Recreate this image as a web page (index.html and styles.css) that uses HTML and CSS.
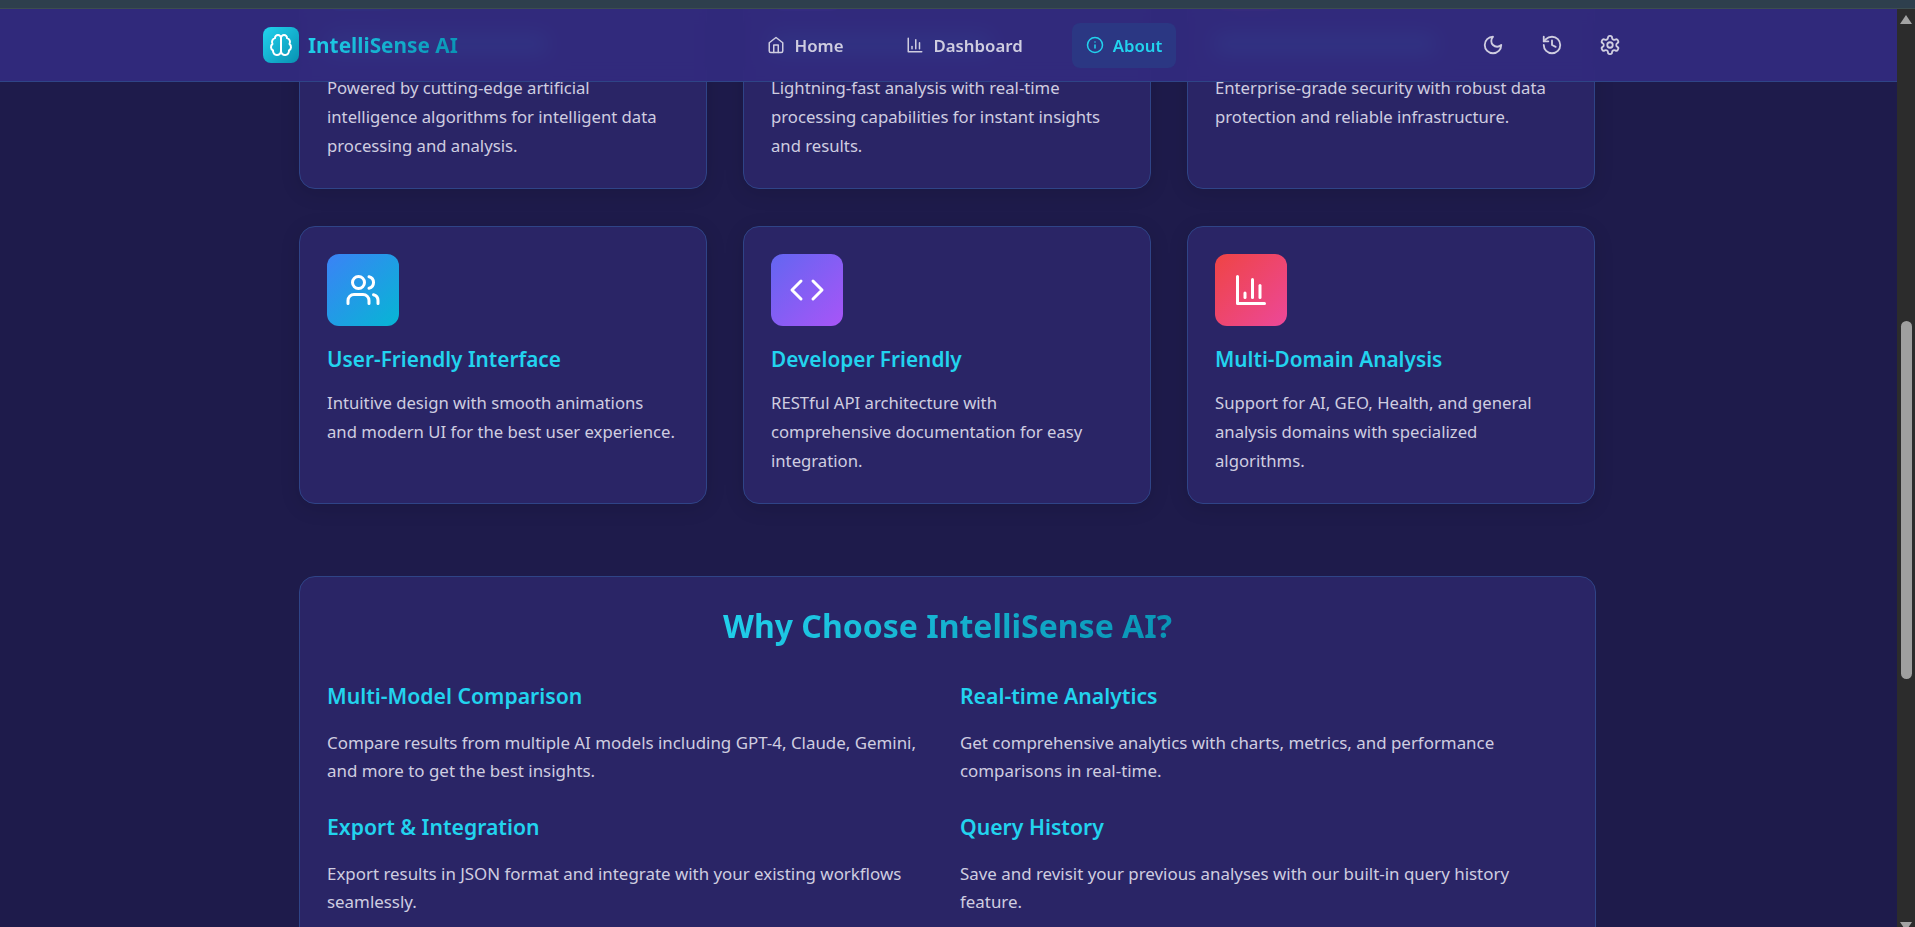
FILE: index.html
```html
<!DOCTYPE html>
<html>

<head>
    <meta name="viewport" content="width=device-width, initial-scale=1">
    <title>IntelliSense AI - About</title>
    <link rel="stylesheet" href="styles.css">
</head>

<body>

<div class="topstrip"></div>

<div class="window">

    <div class="viewport">

        <nav class="navbar">
            <div class="nav-inner">
                <a href="#" class="brand">
                    <span class="brand-icon">
                        <svg class="icon" width="24" height="24" viewBox="0 0 24 24"><path d="M12 5a3 3 0 1 0-5.997.125 4 4 0 0 0-2.526 5.77 4 4 0 0 0 .556 6.588A4 4 0 1 0 12 18Z"/><path d="M12 5a3 3 0 1 1 5.997.125 4 4 0 0 1 2.526 5.77 4 4 0 0 1-.556 6.588A4 4 0 1 1 12 18Z"/></svg>
                    </span>
                    <span class="brand-name gradient-text">IntelliSense AI</span>
                </a>

                <div class="nav-links">
                    <a href="#" class="nav-link">
                        <svg class="icon" width="18" height="18" viewBox="0 0 24 24"><path d="m3 9 9-7 9 7v11a2 2 0 0 1-2 2H5a2 2 0 0 1-2-2z"/><path d="M9 22V12h6v10"/></svg>
                        Home
                    </a>
                    <a href="#" class="nav-link">
                        <svg class="icon" width="18" height="18" viewBox="0 0 24 24"><path d="M3 3v18h18"/><path d="M18 17V9"/><path d="M13 17V5"/><path d="M8 17v-3"/></svg>
                        Dashboard
                    </a>
                    <a href="#" class="nav-link active">
                        <svg class="icon" width="18" height="18" viewBox="0 0 24 24"><circle cx="12" cy="12" r="10"/><path d="M12 16v-4"/><path d="M12 8h.01"/></svg>
                        About
                    </a>
                </div>

                <div class="nav-actions">
                    <button class="icon-btn">
                        <svg class="icon" width="22" height="22" viewBox="0 0 24 24"><path d="M12 3a6 6 0 0 0 9 9 9 9 0 1 1-9-9Z"/></svg>
                    </button>
                    <button class="icon-btn">
                        <svg class="icon" width="22" height="22" viewBox="0 0 24 24"><path d="M3 12a9 9 0 1 0 9-9 9.75 9.75 0 0 0-6.74 2.74L3 8"/><path d="M3 3v5h5"/><path d="M12 7v5l4 2"/></svg>
                    </button>
                    <button class="icon-btn">
                        <svg class="icon" width="22" height="22" viewBox="0 0 24 24"><path d="M12.22 2h-.44a2 2 0 0 0-2 2v.18a2 2 0 0 1-1 1.73l-.43.25a2 2 0 0 1-2 0l-.15-.08a2 2 0 0 0-2.73.73l-.22.38a2 2 0 0 0 .73 2.73l.15.1a2 2 0 0 1 1 1.72v.51a2 2 0 0 1-1 1.74l-.15.09a2 2 0 0 0-.73 2.73l.22.38a2 2 0 0 0 2.73.73l.15-.08a2 2 0 0 1 2 0l.43.25a2 2 0 0 1 1 1.73V20a2 2 0 0 0 2 2h.44a2 2 0 0 0 2-2v-.18a2 2 0 0 1 1-1.73l.43-.25a2 2 0 0 1 2 0l.15.08a2 2 0 0 0 2.73-.73l.22-.39a2 2 0 0 0-.73-2.73l-.15-.08a2 2 0 0 1-1-1.74v-.5a2 2 0 0 1 1-1.74l.15-.09a2 2 0 0 0 .73-2.73l-.22-.38a2 2 0 0 0-2.73-.73l-.15.08a2 2 0 0 1-2 0l-.43-.25a2 2 0 0 1-1-1.73V4a2 2 0 0 0-2-2z"/><circle cx="12" cy="12" r="3"/></svg>
                    </button>
                </div>
            </div>
        </nav>

        <main class="content">

            <section class="features">
                <!-- top of this row is scrolled away under the navbar -->
                <div class="card">
                    <div class="card-icon icon-cyan"></div>
                    <div class="title-under-nav"></div>
                    <p>Powered by cutting-edge artificial intelligence algorithms for intelligent data processing and analysis.</p>
                </div>
                <div class="card">
                    <div class="card-icon icon-purple"></div>
                    <div class="title-under-nav"></div>
                    <p>Lightning-fast analysis with real-time processing capabilities for instant insights and results.</p>
                </div>
                <div class="card">
                    <div class="card-icon icon-red"></div>
                    <div class="title-under-nav"></div>
                    <p>Enterprise-grade security with robust data protection and reliable infrastructure.</p>
                </div>

                <div class="card">
                    <div class="card-icon icon-blue">
                        <svg class="icon" width="36" height="36" viewBox="0 0 24 24"><path d="M16 21v-2a4 4 0 0 0-4-4H6a4 4 0 0 0-4 4v2"/><circle cx="9" cy="7" r="4"/><path d="M22 21v-2a4 4 0 0 0-3-3.87"/><path d="M16 3.13a4 4 0 0 1 0 7.75"/></svg>
                    </div>
                    <h3>User-Friendly Interface</h3>
                    <p>Intuitive design with smooth animations and modern UI for the best user experience.</p>
                </div>
                <div class="card">
                    <div class="card-icon icon-purple">
                        <svg class="icon" width="36" height="36" viewBox="0 0 24 24"><path d="m16 18 6-6-6-6"/><path d="m8 6-6 6 6 6"/></svg>
                    </div>
                    <h3>Developer Friendly</h3>
                    <p>RESTful API architecture with comprehensive documentation for easy integration.</p>
                </div>
                <div class="card">
                    <div class="card-icon icon-red">
                        <svg class="icon" width="36" height="36" viewBox="0 0 24 24"><path d="M3 3v18h18"/><path d="M18 17V9"/><path d="M13 17V5"/><path d="M8 17v-3"/></svg>
                    </div>
                    <h3>Multi-Domain Analysis</h3>
                    <p>Support for AI, GEO, Health, and general analysis domains with specialized algorithms.</p>
                </div>
            </section>

            <section class="why">
                <h2 class="gradient-text">Why Choose IntelliSense AI?</h2>
                <div class="why-grid">
                    <div class="why-item">
                        <h4>Multi-Model Comparison</h4>
                        <p>Compare results from multiple AI models including GPT-4, Claude, Gemini, and more to get the best insights.</p>
                    </div>
                    <div class="why-item">
                        <h4>Real-time Analytics</h4>
                        <p>Get comprehensive analytics with charts, metrics, and performance comparisons in real-time.</p>
                    </div>
                    <div class="why-item">
                        <h4>Export &amp; Integration</h4>
                        <p>Export results in JSON format and integrate with your existing workflows seamlessly.</p>
                    </div>
                    <div class="why-item">
                        <h4>Query History</h4>
                        <p>Save and revisit your previous analyses with our built-in query history feature.</p>
                    </div>
                </div>
            </section>

        </main>
    </div>

    <div class="scrollbar">
        <span class="arrow-up"></span>
        <span class="thumb"></span>
        <span class="arrow-down"></span>
    </div>

</div>

</body>
</html>
```

FILE: styles.css
```css
* {
    box-sizing: border-box;
}

html, body {
    height: 100%;
    margin: 0;
    overflow: hidden;
}

body {
    display: flex;
    flex-direction: column;
    background-color: #1e1b4b;
    color: #cfcde0;
    font-family: "Noto Sans", "Open Sans", sans-serif;
    font-size: 16.9px;
}

a {
    color: inherit;
    text-decoration: none;
}

.topstrip {
    height: 9px;
    flex: none;
    background-color: #2e3f4d;
    border-bottom: 1px solid #3d4d50;
}

.window {
    flex: 1;
    display: flex;
    min-height: 0;
}

.viewport {
    flex: 1;
    position: relative;
    overflow: hidden;
}

.icon {
    fill: none;
    stroke: currentColor;
    stroke-width: 2;
    stroke-linecap: round;
    stroke-linejoin: round;
    flex: none;
}

/* nav sits over the scrolled content */
.navbar {
    position: absolute;
    top: 0;
    left: 0;
    right: 0;
    z-index: 10;
    height: 73px;
    background-color: rgba(49, 42, 125, 0.95);
    border-bottom: 1px solid #2f4487;
    backdrop-filter: blur(10px);
}

.nav-inner {
    width: 1371px;
    height: 100%;
    margin: 0 auto;
    display: flex;
    align-items: center;
    justify-content: space-between;
}

.brand {
    display: flex;
    align-items: center;
    gap: 9px;
}

.brand-icon {
    width: 36px;
    height: 36px;
    border-radius: 8px;
    display: flex;
    align-items: center;
    justify-content: center;
    color: #fff;
    background: linear-gradient(135deg, #22d3ee, #0891b2);
}

.brand-name {
    font-size: 20.8px;
    font-weight: 700;
}

.gradient-text {
    background: linear-gradient(135deg, #22d3ee, #0891b2);
    -webkit-background-clip: text;
    background-clip: text;
    color: transparent;
}

.nav-links {
    display: flex;
    align-items: center;
    gap: 35px;
    margin-left: -10px;
}

.nav-link {
    height: 45px;
    padding: 0 14px;
    border-radius: 8px;
    display: flex;
    align-items: center;
    gap: 9px;
    font-size: 16.8px;
    font-weight: 600;
    color: #cfcde0;
}

.nav-link.active {
    background-color: #2b3783;
    color: #22d3ee;
}

.nav-actions {
    display: flex;
    gap: 36.5px;
    padding-right: 13px;
}

.icon-btn {
    width: 22px;
    height: 22px;
    padding: 0;
    border: none;
    background: none;
    color: #cfcde0;
    cursor: pointer;
}

/* page is scrolled, so the first row starts above the fold */
.content {
    width: 1297px;
    margin: -98px 0 0 299px;
}

.features {
    display: grid;
    grid-template-columns: repeat(3, 408px);
    column-gap: 36px;
    row-gap: 37px;
}

.card {
    height: 278px;
    padding: 27px;
    background-color: #2a2566;
    border: 1px solid #2f4487;
    border-radius: 16px;
    box-shadow: 0 4px 20px rgba(0, 0, 0, 0.12);
}

.card-icon {
    width: 72px;
    height: 72px;
    border-radius: 12px;
    display: flex;
    align-items: center;
    justify-content: center;
    color: #fff;
    margin-bottom: 17px;
}

.icon-cyan {
    background: linear-gradient(135deg, #22d3ee, #0891b2);
}

.icon-blue {
    background: linear-gradient(135deg, #3b82f6, #06b6d4);
}

.icon-purple {
    background: linear-gradient(135deg, #6366f1, #a855f7);
}

.icon-red {
    background: linear-gradient(135deg, #ef4444, #ec4899);
}

.card h3 {
    margin: 0 0 13px;
    font-size: 20.8px;
    line-height: 32px;
    font-weight: 600;
    color: #22d3ee;
}

/* blurred heading showing faintly through the navbar */
.title-under-nav {
    width: 220px;
    height: 32px;
    padding: 6px 0;
    margin-bottom: 13px;
    background-color: #22d3ee;
    background-clip: content-box;
}

.card p {
    max-width: 349px;
    margin: 0;
    font-size: 16.7px;
    line-height: 29px;
}

.why {
    margin-top: 72px;
    padding: 25px 27px 60px;
    background-color: #2a2566;
    border: 1px solid #2f4487;
    border-radius: 16px;
}

.why h2 {
    width: fit-content;
    margin: 0 auto 31px;
    font-size: 32px;
    line-height: 48px;
    font-weight: 700;
}

.why-grid {
    display: grid;
    grid-template-columns: 608px 608px;
    column-gap: 25px;
    row-gap: 27px;
}

.why-item h4 {
    margin: 0 0 18px;
    font-size: 21.2px;
    line-height: 30px;
    font-weight: 600;
    color: #22d3ee;
}

.why-item p {
    margin: 0;
    line-height: 28px;
}

.scrollbar {
    width: 18px;
    flex: none;
    position: relative;
    background-color: #2c2c2c;
}

.arrow-up,
.arrow-down {
    position: absolute;
    left: 3px;
    width: 0;
    height: 0;
    border-left: 6px solid transparent;
    border-right: 6px solid transparent;
}

.arrow-up {
    top: 6px;
    border-bottom: 9px solid #a3a3a3;
}

/* window runs a little past the bottom of the shot */
.arrow-down {
    bottom: -4px;
    border-top: 9px solid #a3a3a3;
}

.thumb {
    position: absolute;
    top: 312px;
    left: 4px;
    width: 11px;
    height: 358px;
    background-color: #9f9f9f;
    border-radius: 6px;
}
```
